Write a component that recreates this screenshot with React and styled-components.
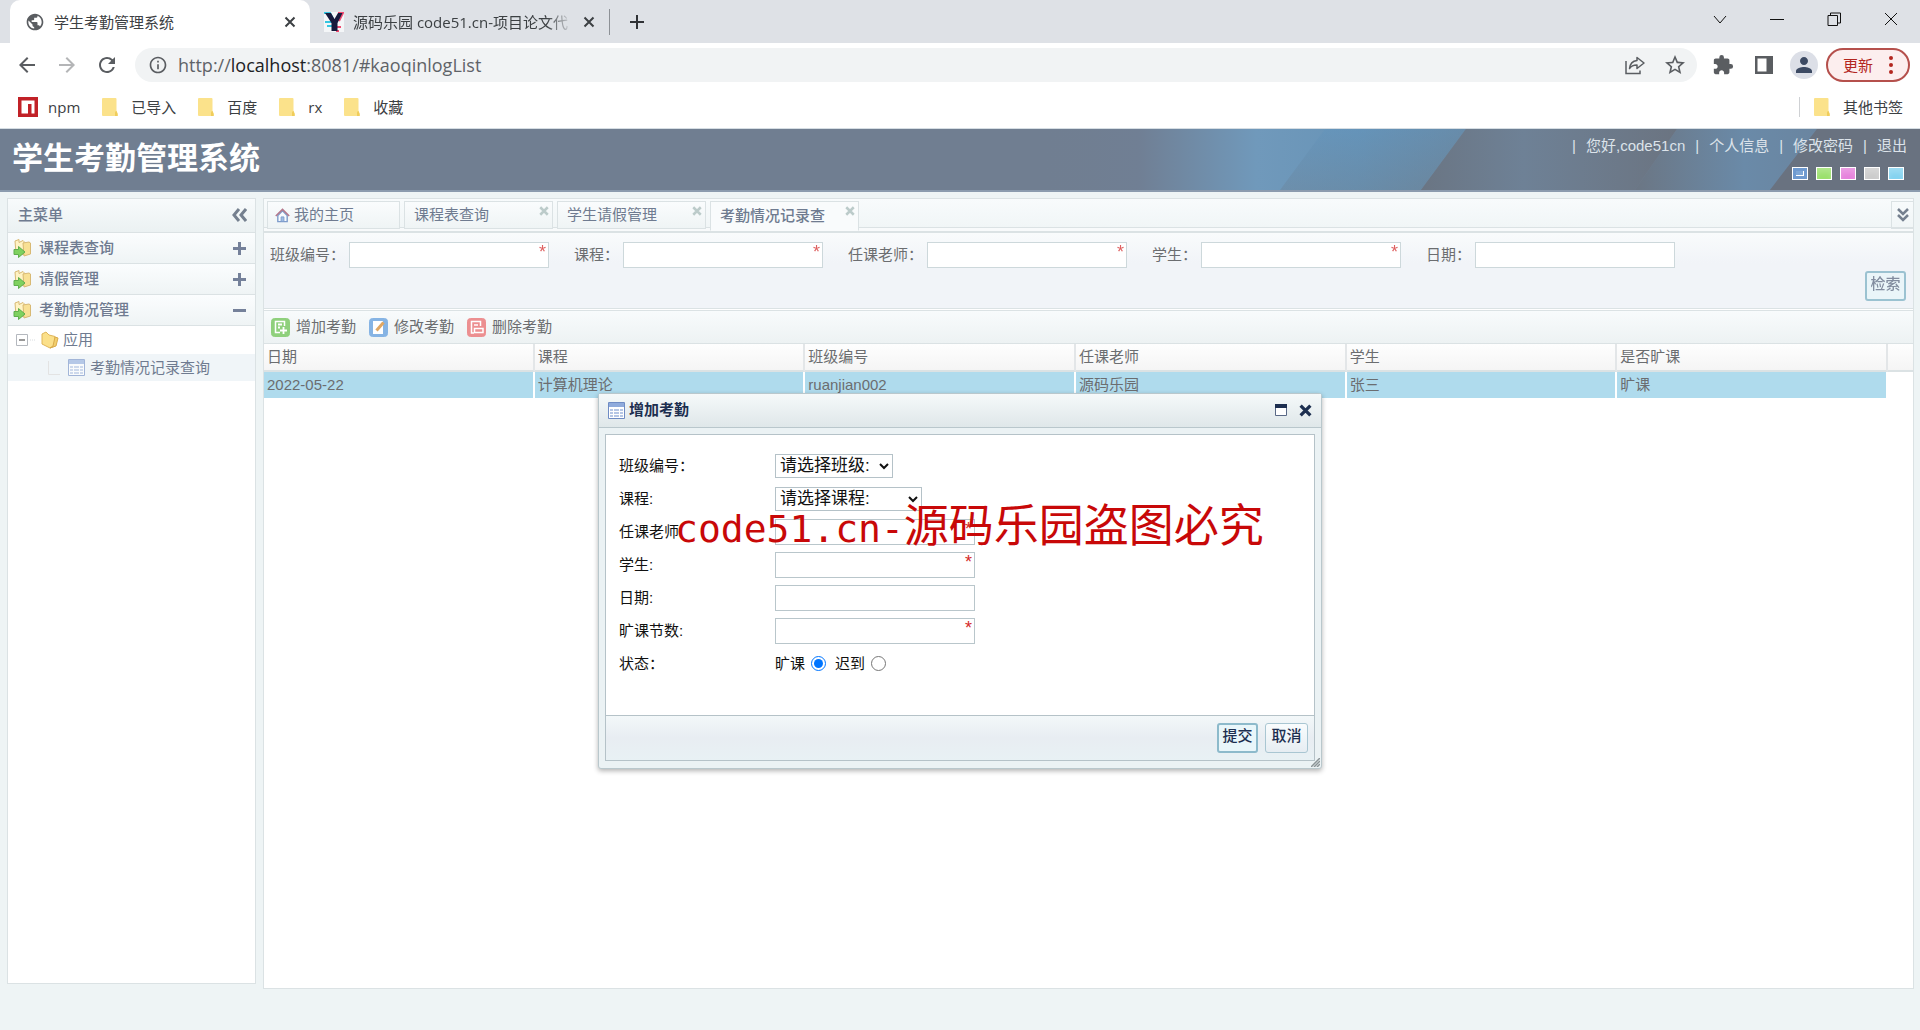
// libraries
import React, { useState } from 'react'
import styled, { createGlobalStyle } from 'styled-components'
import {
    MdArrowBack,
    MdArrowForward,
    MdExtension,
    MdInfoOutline,
    MdPerson,
    MdPublic,
    MdRefresh,
    MdStarBorder
} from 'react-icons/md'

// theme values
const COLORS = {
    white: '#ffffff',
    strip: '#dee1e6',
    icon: '#5a5d61',
    page: '#eef4f5',
    line: '#dbe2e4',
    text: '#6b6d70',
    title: '#6f7b90',
    row: '#afdbed',
    navy: '#1d2f50',
    red: '#c80808'
}

const UI_FONT = '"Open Sans", "Noto Sans CJK SC", sans-serif'
const PAGE_FONT = '"Liberation Sans", "Noto Sans CJK SC", sans-serif'

// default values
const bookmarks = ['已导入', '百度', 'rx', '收藏']
const userLinks = ['您好,code51cn', '个人信息', '修改密码', '退出']
const skins = ['#7ea6d6', '#9be06c', '#e682dc', '#cccccc', '#84d3f0']
const menus = [
    { name: '课程表查询', open: false },
    { name: '请假管理', open: false },
    { name: '考勤情况管理', open: true }
]
const pageTabs = ['课程表查询', '学生请假管理', '考勤情况记录查']
const filters = [
    { id: 'f_class', label: '班级编号：', required: true },
    { id: 'f_course', label: '课程：', required: true },
    { id: 'f_teacher', label: '任课老师：', required: true },
    { id: 'f_student', label: '学生：', required: true },
    { id: 'f_date', label: '日期：' }
]
const columns = ['日期', '课程', '班级编号', '任课老师', '学生', '是否旷课']
const rows = [['2022-05-22', '计算机理论', 'ruanjian002', '源码乐园', '张三', '旷课']]

const GlobalStyle = createGlobalStyle`
    * {
        box-sizing: border-box;
    }

    body {
        margin: 0;
        background-color: ${COLORS.page};
        font-family: ${PAGE_FONT};
        font-size: 15px;
        line-height: 20px;
    }

    button,
    input,
    select {
        font: inherit;
        margin: 0;
    }

    button {
        padding: 0;
        border: 0;
        background: none;
        color: inherit;
    }

    a {
        color: inherit;
        text-decoration: none;
    }

    svg {
        display: block;
        flex: none;
    }
`

// icons
const CloseIcon = ({ size = 12, color = '#3c4043', width = 2 }) => (
    <svg width={size} height={size} viewBox="0 0 12 12">
        <path d="M1.5 1.5 10.5 10.5M10.5 1.5 1.5 10.5" stroke={color} strokeWidth={width} fill="none" />
    </svg>
)

const BookmarkIcon = () => (
    <svg width="16" height="20" viewBox="0 0 16 20">
        <path d="M1 1h12.500q1 0 1 1v11.500l1 3v2.500H1q-1 0-1-1V2q0-1 1-1z" fill="#fbe28b" />
        <path d="M13 19v-3.500q0-1.500 1.500-1.500l1.200 3v2z" fill="#f0cd5b" />
    </svg>
)

const NpmIcon = () => (
    <svg width="20" height="20" viewBox="0 0 20 20">
        <path d="M0 0h20v20H0z" fill="#c12127" />
        <path d="M3.500 3.500h13v13h-3V7H10v9.500H3.500z" fill="#fff" />
    </svg>
)

const YenIcon = () => (
    <svg width="20" height="20" viewBox="0 0 20 20">
        <path d="M0 0h20v20H0z" fill="#f4f6f8" />
        <path d="M0 1h6l3 6M1 10h7M3 14h5" stroke="#35c5e0" strokeWidth="2" fill="none" />
        <path d="M14 1h5l-4 8M11 15h6M12 19h3" stroke="#f04a70" strokeWidth="2" fill="none" />
        <path d="M1 1h6l3.500 6L14 1h4.500l-5 10v8h-6v-8z" fill="#161a3c" />
    </svg>
)

const ShareIcon = () => (
    <svg width="20" height="20" viewBox="0 0 20 20" fill="none" stroke={COLORS.icon} strokeWidth="1.500">
        <path d="M1 6v12.500h14v-3" />
        <path d="M12 2.500l7 5.500-7 5.500v-3.500c-4 0-6 1-7.500 3.500.5-4.500 3-7.500 7.500-8z" strokeLinejoin="round" />
    </svg>
)

const PanelIcon = () => (
    <svg width="18" height="18" viewBox="0 0 18 18">
        <path d="M0 0h18v18H0zM2.500 2.500v13h9v-13z" fill={COLORS.icon} fillRule="evenodd" />
    </svg>
)

const WindowIcons = {
    more: 'M1 4l6 7 6-7',
    minimize: 'M0 7.500h14',
    restore: 'M1 3.500h9.500v10H1zM3.500 3.500v-2.500H13.500v10H10.500',
    close: 'M1 1l12 12M13 1 1 13'
}

const AppIcon = () => (
    <svg width="19" height="19" viewBox="0 0 19 19">
        <path d="M2 2l4-1.500v3l4-2 1 1v13l-8-1z" fill="#fff3c4" stroke="#d8b974" />
        <path d="M10 4l6-1 1.500 1v11L11 17z" fill="#f8e094" stroke="#d8b974" />
        <path d="M1 10.500h4.500v-3L12 13l-6.500 5.500v-3H1z" fill="#7fd15f" stroke="#5fae4c" />
    </svg>
)

const FolderIcon = () => (
    <svg width="18" height="18" viewBox="0 0 18 18">
        <path d="M1 3l4-2 3 3 6 1.500v9.500l-5 2-8-4z" fill="#fbe08a" stroke="#e0b659" />
        <path d="M14 6l3 1-2 8-6 2 3-2z" fill="#f3cf6c" stroke="#d9ab4c" />
    </svg>
)

const GridIcon = ({ faded }) => (
    <svg width="17" height="17" viewBox="0 0 17 17" opacity={faded ? 0.6 : 1}>
        <path d="M.5.5h16v16H.5z" fill="#fff" stroke="#6f8cc4" />
        <path d="M1 1h15v4H1z" fill="#8fabdc" />
        <path d="M2 8h13M2 11h13M2 14h13" stroke="#9fb5dd" strokeWidth="1.500" />
        <path d="M5.500 5v11M11.500 5v11" stroke="#fff" />
    </svg>
)

const HomeIcon = () => (
    <svg width="15" height="15" viewBox="0 0 16 16">
        <path d="M3 8v6.500h10V8L8 3z" fill="#f7fbff" stroke="#7e9ccb" strokeWidth="1.500" />
        <path d="M6.500 14v-4.500h3V14" fill="#9dbde5" stroke="#7e9ccb" />
        <path d="M.8 8.500 8 1.500l7.200 7" fill="none" stroke="#b5798c" strokeWidth="1.600" />
    </svg>
)

const ToolIcon = ({ kind }) => {
    const fill = { add: '#8fd07c', edit: '#86b4e4', remove: '#ec8f90' }[kind]
    return (
        <svg width="19" height="19" viewBox="0 0 19 19">
            <rect x=".5" y=".5" width="18" height="18" rx="3" fill={fill} stroke={fill} />
            {kind === 'add' && (
                <>
                    <path d="M9 14.500H4.500v-11h9V8" fill="none" stroke="#fff" strokeWidth="1.500" />
                    <path d="M7 6.500h4M7 9.500h2M12.500 9v7M9 12.500h7" stroke="#fff" strokeWidth="1.800" />
                </>
            )}
            {kind === 'edit' && (
                <>
                    <path d="M4 3h10v13H4z" fill="#fff" />
                    <path d="M7.500 12.500 14.500 4.500" stroke="#e0a763" strokeWidth="3" />
                </>
            )}
            {kind === 'remove' && (
                <>
                    <path d="M7 15H4.500V3.500h9V8" fill="none" stroke="#fff" strokeWidth="1.500" />
                    <path d="M7 7h4M7.500 10.500H16v4H7.500z" fill="none" stroke="#fff" strokeWidth="1.500" />
                </>
            )}
        </svg>
    )
}

const HeaderArt = () => (
    <Art viewBox="0 0 920 62" preserveAspectRatio="none">
        <defs>
            <linearGradient id="glow" x1="0" x2="1">
                <stop offset="0" stopColor="#707e91" stopOpacity="0" />
                <stop offset="0.25" stopColor="#707f94" />
                <stop offset="0.52" stopColor="#7099bb" />
                <stop offset="0.75" stopColor="#6894b7" />
                <stop offset="1" stopColor="#6c88a0" />
            </linearGradient>
            <linearGradient id="dim" x1="0" x2="1">
                <stop offset="0" stopColor="#6a7583" />
                <stop offset="0.4" stopColor="#6e8196" />
                <stop offset="1" stopColor="#6b7481" />
            </linearGradient>
            <linearGradient id="band" x1="0" x2="1">
                <stop offset="0" stopColor="#6b7684" />
                <stop offset="0.6" stopColor="#6a8aa8" />
                <stop offset="1" stopColor="#6a85a0" />
            </linearGradient>
            <linearGradient id="shade" x1="0" x2="0" y1="0" y2="1">
                <stop offset="0" stopColor="#5f93bd" stopOpacity="0.35" />
                <stop offset="1" stopColor="#6a7f92" stopOpacity="0.35" />
            </linearGradient>
        </defs>
        <path d="M30 0H466L421 62H30z" fill="url(#glow)" />
        <path d="M325 0H466L421 62H280z" fill="url(#shade)" />
        <path d="M466 0H677L635 62H421z" fill="url(#dim)" />
        <path d="M677 0H817L770 62H635z" fill="url(#band)" />
        <path d="M817 0H920V62H770z" fill="#697280" />
    </Art>
)

// browser window
const BrowserChrome = () => (
    <header>
        <TabStrip>
            <BrowserTab $active>
                <MdPublic size={20} color={COLORS.icon} />
                <TabName>学生考勤管理系统</TabName>
                <button aria-label="关闭标签页"><CloseIcon /></button>
            </BrowserTab>
            <BrowserTab>
                <YenIcon />
                <TabName $fade>源码乐园 code51.cn-项目论文代</TabName>
                <button aria-label="关闭标签页"><CloseIcon /></button>
            </BrowserTab>
            <NewTab aria-label="新标签页">
                <svg width="16" height="16" viewBox="0 0 16 16">
                    <path d="M8 1v14M1 8h14" stroke="#303236" strokeWidth="2" />
                </svg>
            </NewTab>
            <WindowControls>
                {Object.entries(WindowIcons).map(([name, path]) => (
                    <button key={name} aria-label={name}>
                        <svg width="14" height="14" viewBox="0 0 14 14">
                            <path d={path} stroke="#111" fill="none" />
                        </svg>
                    </button>
                ))}
            </WindowControls>
        </TabStrip>
        <AddressRow>
            <NavButton aria-label="后退"><MdArrowBack size={24} /></NavButton>
            <NavButton aria-label="前进" $disabled><MdArrowForward size={24} /></NavButton>
            <NavButton aria-label="刷新"><MdRefresh size={24} /></NavButton>
            <AddressBar>
                <MdInfoOutline size={20} />
                <Url>http://<b>localhost</b>:8081/#kaoqinlogList</Url>
                <ShareIcon />
                <MdStarBorder size={24} />
            </AddressBar>
            <Extensions>
                <MdExtension size={22} />
                <PanelIcon />
                <Avatar><MdPerson size={24} /></Avatar>
            </Extensions>
            <UpdateButton>
                更新
                <svg width="4" height="18" viewBox="0 0 4 18" fill="#b3261e">
                    <circle cx="2" cy="2" r="2" />
                    <circle cx="2" cy="9" r="2" />
                    <circle cx="2" cy="16" r="2" />
                </svg>
            </UpdateButton>
        </AddressRow>
        <BookmarkBar>
            <Bookmark href="#npm" $tight><NpmIcon />npm</Bookmark>
            {bookmarks.map(name => (
                <Bookmark key={name} href="#bookmark"><BookmarkIcon />{name}</Bookmark>
            ))}
            <OtherBookmarks>
                <Bookmark href="#other"><BookmarkIcon />其他书签</Bookmark>
            </OtherBookmarks>
        </BookmarkBar>
    </header>
)

const SideMenu = () => (
    <Side>
        <SideTitle>
            主菜单
            <button aria-label="收起">
                <svg width="15" height="14" viewBox="0 0 15 14">
                    <path d="M7 1 2 7l5 6M14 1 9 7l5 6" stroke="#75808f" strokeWidth="3" fill="none" />
                </svg>
            </button>
        </SideTitle>
        {menus.map(menu => (
            <MenuItem key={menu.name}>
                <AppIcon />
                <span>{menu.name}</span>
                <svg width="13" height="13" viewBox="0 0 13 13">
                    <path d={menu.open ? 'M0 6.500h13' : 'M0 6.500h13M6.500 0v13'} stroke="#75819a" strokeWidth="3" />
                </svg>
            </MenuItem>
        ))}
        <TreeRow>
            <svg width="20" height="12" viewBox="0 0 20 12">
                <path d="M.5.5h11v11H.5z" fill="#fff" stroke="#b4b8be" />
                <path d="M3 6h6" stroke="#777" strokeWidth="1.500" />
                <path d="M14 6h6" stroke="#d8dcdf" strokeDasharray="1 1" />
            </svg>
            <FolderIcon />
            应用
        </TreeRow>
        <TreeRow $leaf>
            <svg width="12" height="14" viewBox="0 0 12 14">
                <path d="M.5 0v13.500H12" fill="none" stroke="#e3e3e3" />
            </svg>
            <GridIcon faded />
            <a href="#kaoqinlogList">考勤情况记录查询</a>
        </TreeRow>
    </Side>
)

const Field = ({ id, required }) => (
    <FieldBox>
        <TextInput id={id} type="text" />
        {required && <Star>*</Star>}
    </FieldBox>
)

const Workspace = () => (
    <Main>
        <PageTabs>
            <PageTab $home><HomeIcon />我的主页</PageTab>
            {pageTabs.map((name, i) => (
                <PageTab key={name} $active={i === 2}>
                    {name}
                    <TabClose><CloseIcon size={10} color="#bccbca" width={3} /></TabClose>
                </PageTab>
            ))}
            <MoreTabs aria-label="更多">
                <svg width="12" height="14" viewBox="0 0 12 14">
                    <path d="M1 1l5 5 5-5M1 7l5 5 5-5" stroke="#75808f" strokeWidth="2.500" fill="none" />
                </svg>
            </MoreTabs>
        </PageTabs>
        <Filters>
            <FilterFields>
                {filters.map(({ id, label, required }) => (
                    <Filter key={id}>
                        <label htmlFor={id}>{label}</label>
                        <Field id={id} required={required} />
                    </Filter>
                ))}
            </FilterFields>
            <ActionButton $primary $faded>检索</ActionButton>
        </Filters>
        <Toolbar>
            <ToolButton><ToolIcon kind="add" />增加考勤</ToolButton>
            <ToolButton><ToolIcon kind="edit" />修改考勤</ToolButton>
            <ToolButton><ToolIcon kind="remove" />删除考勤</ToolButton>
        </Toolbar>
        <Table>
            <thead>
                <tr>
                    {columns.map(name => <th key={name}>{name}</th>)}
                    <th className="gutter" aria-label="scroll" />
                </tr>
            </thead>
            <tbody>
                {rows.map(row => (
                    <tr key={row[0]}>
                        {row.map((cell, i) => <td key={i}>{cell}</td>)}
                        <td className="gutter" />
                    </tr>
                ))}
            </tbody>
        </Table>
    </Main>
)

const AddDialog = () => {
    const [status, setStatus] = useState('absent')

    return (
        <Dialog role="dialog" aria-label="增加考勤">
            <DialogTitle>
                <GridIcon />
                <h2>增加考勤</h2>
                <button aria-label="最大化">
                    <svg width="12" height="12" viewBox="0 0 12 12">
                        <path d="M.5.5h11v11H.5z" fill="#fff" stroke="#5a6986" />
                        <path d="M0 0h12v4H0z" fill={COLORS.navy} />
                    </svg>
                </button>
                <button aria-label="关闭"><CloseIcon size={13} color={COLORS.navy} width={3} /></button>
            </DialogTitle>
            <DialogBody>
                <Form>
                    <label htmlFor="class">班级编号：</label>
                    <Select id="class" $width={118}><option>请选择班级:</option></Select>
                    <label htmlFor="course">课程:</label>
                    <Select id="course" $width={147}><option>请选择课程:</option></Select>
                    <label htmlFor="teacher">任课老师:</label>
                    <Field id="teacher" required />
                    <label htmlFor="student">学生:</label>
                    <Field id="student" required />
                    <label htmlFor="date">日期:</label>
                    <Field id="date" />
                    <label htmlFor="count">旷课节数:</label>
                    <Field id="count" required />
                    <span>状态：</span>
                    <Radios>
                        <label htmlFor="absent">旷课</label>
                        <input
                            id="absent"
                            type="radio"
                            name="status"
                            checked={status === 'absent'}
                            onChange={() => setStatus('absent')}
                        />
                        <label htmlFor="late">迟到</label>
                        <input
                            id="late"
                            type="radio"
                            name="status"
                            checked={status === 'late'}
                            onChange={() => setStatus('late')}
                        />
                    </Radios>
                </Form>
                <DialogFooter>
                    <ActionButton $primary>提交</ActionButton>
                    <ActionButton>取消</ActionButton>
                </DialogFooter>
            </DialogBody>
            <Grip width="9" height="9" viewBox="0 0 9 9">
                <path d="M0 9 9 0M3 9 9 3M6 9 9 6" stroke="#8b9497" strokeWidth="1.500" />
            </Grip>
            <Watermark><span>code51.cn-</span>源码乐园盗图必究</Watermark>
        </Dialog>
    )
}

export default function App() {
    return (
        <Screen>
            <GlobalStyle />
            <BrowserChrome />
            <Page>
                <SiteHeader>
                    <HeaderArt />
                    <h1>学生考勤管理系统</h1>
                    <UserArea>
                        <UserLinks>
                            {userLinks.map(name => (
                                <React.Fragment key={name}>
                                    <span>|</span>
                                    <a href="#user">{name}</a>
                                </React.Fragment>
                            ))}
                        </UserLinks>
                        <Skins>
                            {skins.map((color, i) => <Skin key={color} color={color} $active={i === 0} aria-label={`skin ${i + 1}`} />)}
                        </Skins>
                    </UserArea>
                </SiteHeader>
                <Content>
                    <SideMenu />
                    <Workspace />
                </Content>
                <Overlay>
                    <AddDialog />
                </Overlay>
            </Page>
        </Screen>
    )
}

const Screen = styled.div`
    min-height: 100vh;
    display: flex;
    flex-direction: column;
`

const TabStrip = styled.div`
    display: flex;
    align-items: stretch;
    height: 43px;
    padding-left: 10px;
    background-color: ${COLORS.strip};
    font-family: ${UI_FONT};
    color: #3c4043;
`

const BrowserTab = styled.div`
    display: flex;
    align-items: center;
    width: ${({ $active }) => $active ? '300px' : '299px'};
    padding: 0 14px 0 ${({ $active }) => $active ? '15px' : '14px'};
    border-radius: 10px 10px 0 0;
    background-color: ${({ $active }) => $active ? COLORS.white : 'transparent'};
`

const TabName = styled.span`
    flex: 1;
    min-width: 0;
    margin: 0 10px 0 9px;
    overflow: hidden;
    white-space: nowrap;
    mask-image: ${({ $fade }) => $fade ? 'linear-gradient(90deg, #000 88%, transparent)' : 'none'};
`

const NewTab = styled.button`
    display: flex;
    align-items: center;
    align-self: center;
    height: 26px;
    padding-left: 19px;
    border-left: 1px solid #8d9196;
`

const WindowControls = styled.div`
    display: flex;
    gap: 43px;
    align-items: center;
    height: 37px;
    margin-left: auto;
    padding-right: 22px;
`

const AddressRow = styled.div`
    display: flex;
    align-items: center;
    height: 44px;
    padding: 0 10px 0 7px;
    background-color: ${COLORS.white};
    color: ${COLORS.icon};
    font-family: ${UI_FONT};
`

const NavButton = styled.button`
    display: flex;
    justify-content: center;
    width: 40px;
    opacity: ${({ $disabled }) => $disabled ? 0.45 : 1};
`

const AddressBar = styled.div`
    flex: 1;
    display: flex;
    align-items: center;
    height: 34px;
    margin-left: 8px;
    padding: 0 10px 0 13px;
    border-radius: 17px;
    background-color: #f1f3f4;
`

const Url = styled.span`
    flex: 1;
    margin-left: 10px;
    font-size: 18px;
    color: #5f6368;

    & + svg {
        margin-right: 18px;
    }

    b {
        font-weight: 400;
        color: #202124;
    }
`

const Extensions = styled.div`
    display: flex;
    align-items: center;
    gap: 17px;
    margin: 0 8px 0 15px;

    svg + svg {
        margin-left: 4px;
    }
`

const Avatar = styled.span`
    display: flex;
    align-items: center;
    justify-content: center;
    width: 28px;
    height: 28px;
    border-radius: 50%;
    background-color: #dcdfe7;
    color: #3c4a63;
`

const UpdateButton = styled.button`
    display: flex;
    align-items: center;
    gap: 16px;
    height: 34px;
    padding: 0 15px;
    border: 2px solid #b5504c;
    border-radius: 17px;
    background-color: #fceeee;
    color: #b3261e;
`

const BookmarkBar = styled.nav`
    display: flex;
    align-items: center;
    gap: 22px;
    height: 42px;
    padding: 0 17px 2px 18px;
    border-bottom: 1px solid #d5dde3;
    background-color: ${COLORS.white};
    font-family: ${UI_FONT};
`

const Bookmark = styled.a`
    display: flex;
    align-items: center;
    gap: ${({ $tight }) => $tight ? '10px' : '13px'};
    color: #3c4043;
`

const OtherBookmarks = styled.div`
    margin-left: auto;
    padding-left: 14px;
    border-left: 1px solid #cfd1d4;
`

const Page = styled.div`
    position: relative;
    flex: 1;
    display: flex;
    flex-direction: column;
`

const SiteHeader = styled.div`
    position: relative;
    display: flex;
    justify-content: space-between;
    height: 63px;
    padding: 0 13px 0 12px;
    border-bottom: 2px solid #8b9bae;
    background-color: #707e91;
    color: ${COLORS.white};

    h1 {
        margin: 0;
        font-size: 31px;
        line-height: 60px;
    }
`

const Art = styled.svg`
    position: absolute;
    top: 0;
    right: 0;
    width: 920px;
    height: 100%;
`

const UserArea = styled.div`
    position: relative;
    padding-top: 7px;
    color: #dce3ea;
`

const UserLinks = styled.div`
    display: flex;
    gap: 10px;
`

const Skins = styled.div`
    display: flex;
    justify-content: flex-end;
    gap: 8px;
    margin-top: 11px;
    padding-right: 3px;
`

const Skin = styled.button`
    width: 16px;
    height: 13px;
    border: 1px solid ${COLORS.white};
    background: ${({ color }) => color};
    box-shadow: ${({ $active }) => $active ? 'inset 0 0 0 3px #6f9ad0, inset -4px -4px 0 #fff' : 'inset 0 5px 5px rgba(255, 255, 255, 0.2)'};
`

const Content = styled.div`
    flex: 1;
    display: flex;
    align-items: stretch;
    padding: 6px 6px 41px 7px;
`

const Side = styled.aside`
    width: 249px;
    margin: 0 7px 5px 0;
    border: 1px solid ${COLORS.line};
    background-color: ${COLORS.white};
    color: ${COLORS.title};
`

const SideTitle = styled.div`
    display: flex;
    align-items: center;
    justify-content: space-between;
    height: 34px;
    padding: 0 8px 1px 10px;
    border-bottom: 1px solid ${COLORS.line};
    background: linear-gradient(#f8fbfc, #ebf1f2);
    font-weight: 500;
`

const MenuItem = styled.button`
    display: flex;
    align-items: center;
    gap: 7px;
    width: 100%;
    height: 31px;
    padding: 0 9px 0 5px;
    border-bottom: 1px solid ${COLORS.line};
    background: linear-gradient(#fbfdfe, #eff4f5);
    font-weight: 500;
    text-align: left;

    span {
        flex: 1;
    }
`

const TreeRow = styled.div`
    display: flex;
    align-items: center;
    gap: 4px;
    height: ${({ $leaf }) => $leaf ? '27px' : '28px'};
    padding-left: ${({ $leaf }) => $leaf ? '40px' : '8px'};
    background-color: ${({ $leaf }) => $leaf ? '#f0f5f8' : COLORS.white};

    svg + svg {
        margin-left: ${({ $leaf }) => $leaf ? '4px' : '1px'};
    }

    svg + a {
        margin-left: 1px;
    }
`

const Main = styled.main`
    flex: 1;
    min-width: 0;
    border: 1px solid ${COLORS.line};
    background-color: ${COLORS.white};
    color: ${COLORS.text};
`

const PageTabs = styled.div`
    display: flex;
    gap: 4px;
    height: 34px;
    padding: 2px 0 0 3px;
    border-bottom: 2px solid ${COLORS.line};
    background: linear-gradient(#f8fbfc, #f0f5f6);
    box-shadow: inset 0 -3px 0 #f8fafb, inset 0 -4px 0 ${COLORS.line};
`

const PageTab = styled.div`
    display: flex;
    align-items: center;
    gap: 4px;
    width: ${({ $home }) => $home ? '133px' : '149px'};
    height: ${({ $active }) => $active ? '30px' : '28px'};
    padding-left: ${({ $home }) => $home ? '7px' : '9px'};
    border: 1px solid ${COLORS.line};
    border-bottom-color: ${({ $active }) => $active ? 'transparent' : COLORS.line};
    background: ${({ $active }) => $active ? '#f9fbfc' : 'linear-gradient(#fafcfd, #eff4f5)'};
    color: ${COLORS.title};
    font-weight: ${({ $active }) => $active ? 500 : 400};
`

const TabClose = styled.button`
    align-self: flex-start;
    margin: 4px 3px 0 auto;
`

const MoreTabs = styled.button`
    display: flex;
    align-items: center;
    justify-content: center;
    width: 22px;
    height: 28px;
    margin-left: auto;
    border: 1px solid ${COLORS.line};
    border-right: 0;
`

const Filters = styled.section`
    display: flex;
    flex-direction: column;
    align-items: flex-end;
    height: 76px;
    padding: 9px 7px 0 6px;
    border-bottom: 1px solid ${COLORS.line};
    background: linear-gradient(#f9fbfc, #f1f4f8 40%);
`

const FilterFields = styled.div`
    display: flex;
    flex-wrap: wrap;
    gap: 25px;
    width: 100%;
    margin-bottom: 3px;
`

const Filter = styled.div`
    display: flex;
    align-items: center;
    gap: 4px;
`

const FieldBox = styled.div`
    position: relative;
    display: flex;
    width: 200px;
`

const TextInput = styled.input`
    width: 100%;
    height: 26px;
    padding: 0 14px 0 4px;
    border: 1px solid #b9c6cb;
    border-radius: 0;
    background-color: ${COLORS.white};
    outline: none;

    ${Filter} & {
        border-color: #cdd8db;
    }
`

const Star = styled.span`
    position: absolute;
    top: 0;
    right: 3px;
    font-size: 18px;
    color: #d42a2a;

    ${Filter} & {
        opacity: 0.75;
    }
`

const Toolbar = styled.div`
    display: flex;
    align-items: center;
    gap: 13px;
    height: 34px;
    margin-top: 1px;
    padding-left: 7px;
    border: solid ${COLORS.line};
    border-width: 1px 0;
    background: linear-gradient(#f8fbfc, #edf2f3);
`

const ToolButton = styled.button`
    display: flex;
    align-items: center;
    gap: 6px;
`

const Table = styled.table`
    width: 100%;
    table-layout: fixed;
    border-collapse: separate;
    border-spacing: 0;

    th,
    td {
        height: 26px;
        padding: 0 3px;
        border-right: 2px solid ${COLORS.white};
        text-align: left;
        font-weight: 400;
        white-space: nowrap;
    }

    th {
        height: 28px;
        border-right-color: #e3e6e8;
        border-bottom: 2px solid ${COLORS.line};
        background: linear-gradient(#fefefe, #f5f5f5);
    }

    td {
        background-color: ${COLORS.row};
    }

    .gutter {
        width: 25px;
        border-right: 0;
    }

    td.gutter {
        background-color: ${COLORS.white};
    }
`

const Overlay = styled.div`
    position: absolute;
    inset: 0;
    display: flex;
    align-items: center;
    justify-content: center;
    padding-top: 2px;
`

const Dialog = styled.section`
    position: relative;
    width: 724px;
    padding: 0 6px 7px;
    border: 1px solid #b9c7cc;
    border-radius: 3px;
    background-color: #ebf2f4;
    box-shadow: 0 2px 5px rgba(0, 0, 0, 0.3);
`

const DialogTitle = styled.div`
    display: flex;
    align-items: center;
    height: 34px;
    margin: 0 -6px 6px;
    padding: 0 9px;
    border-bottom: 1px solid #b9c7cc;
    background: linear-gradient(#f5f9fa, #dfe7e9);
    color: ${COLORS.navy};

    h2 {
        flex: 1;
        margin: 0 0 0 4px;
        font-size: 15px;
    }

    button + button {
        margin-left: 12px;
    }
`

const DialogBody = styled.div`
    border: 1px solid #b5c2c8;
    background-color: ${COLORS.white};
`

const Form = styled.form`
    display: grid;
    grid-template-columns: 156px 1fr;
    grid-auto-rows: 26px;
    gap: 7px 0;
    align-items: center;
    height: 280px;
    padding: 18px 13px 0;
    color: #111111;
`

const Select = styled.select`
    width: ${({ $width }) => $width + 'px'};
    height: 24px;
    border: 1px solid #b5c2c8;
    border-radius: 0;
    background-color: ${COLORS.white};
    font-size: 17px;
    line-height: 20px;
    color: #111111;
`

const Radios = styled.div`
    display: flex;
    align-items: center;
    gap: 6px;

    input {
        width: 15px;
        height: 15px;
    }

    input + label {
        margin-left: 3px;
    }
`

const DialogFooter = styled.div`
    display: flex;
    justify-content: flex-end;
    gap: 7px;
    height: 45px;
    padding: 7px 6px 0;
    border-top: 1px solid #b5c2c8;
    background: linear-gradient(#f3f8f9, #e8edf2 50%, #e8f1f4);
`

const ActionButton = styled.button`
    width: ${({ $primary }) => $primary ? '41px' : '43px'};
    height: 30px;
    padding-bottom: 4px;
    border: ${({ $primary }) => $primary ? '2px solid #8dbacb' : '1px solid #a9c6d2'};
    border-radius: 3px;
    background: ${({ $primary }) => $primary ? '#e9f6fa' : 'linear-gradient(#f9fcfd, #e6edf2)'};
    font-weight: 500;
    color: ${({ $faded }) => $faded ? COLORS.title : COLORS.navy};
    opacity: ${({ $faded }) => $faded ? 0.85 : 1};
`

const Grip = styled.svg`
    position: absolute;
    right: 1px;
    bottom: 1px;
`

const Watermark = styled.p`
    position: absolute;
    top: 103px;
    left: 76px;
    margin: 0;
    font-size: 45px;
    line-height: 60px;
    white-space: nowrap;
    color: ${COLORS.red};
    pointer-events: none;

    span {
        font-family: "DejaVu Sans Mono", monospace;
        font-size: 38px;
    }
`
